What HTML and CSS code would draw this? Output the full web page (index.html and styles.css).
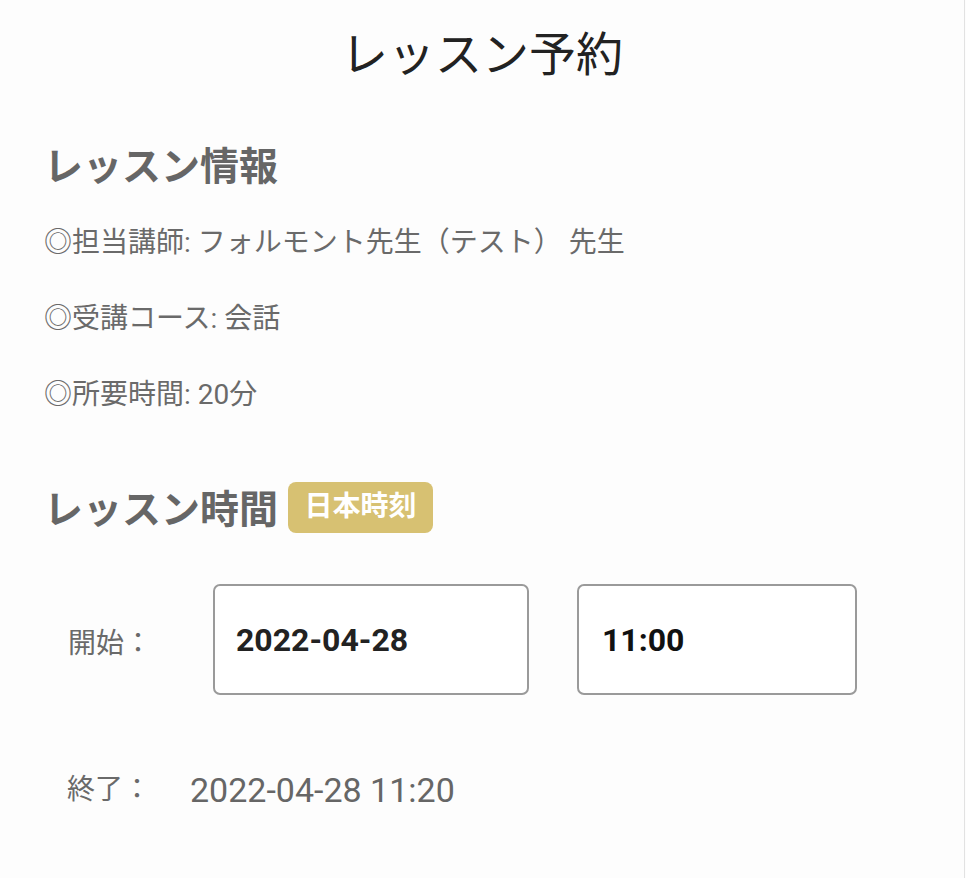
FILE: index.html
```html
<!DOCTYPE html>
<html lang="ja">
<head>
<meta charset="utf-8">
<title>レッスン予約</title>
<link rel="stylesheet" href="styles.css">
</head>
<body>
<div class="page">
  <h1 class="title">レッスン予約</h1>
  <section class="info">
    <h2 class="heading">レッスン情報</h2>
    <p class="line">◎担当講師: フォルモント先生（テスト） 先生</p>
    <p class="line">◎受講コース: 会話</p>
    <p class="line">◎所要時間: 20分</p>
  </section>
  <section class="time">
    <h2 class="heading heading-row">レッスン時間<span class="badge">日本時刻</span></h2>
    <div class="start-row">
      <span class="label">開始：</span>
      <div class="field field-date">2022-04-28</div>
      <div class="field field-time">11:00</div>
    </div>
    <div class="end-row">
      <span class="label label-end">終了：</span>
      <span class="end-value">2022-04-28 11:20</span>
    </div>
  </section>
</div>
</body>
</html>
```
FILE: styles.css
```css
html, body {
  margin: 0;
  padding: 0;
  background: #fdfdfd;
}
body {
  font-family: Roboto, "Noto Sans CJK JP", sans-serif;
  color: #666;
}
.page {
  width: 965px;
  height: 878px;
  box-sizing: border-box;
  border-right: 1px solid #e2e2e2;
  overflow: hidden;
}
.title {
  margin: 0;
  padding-top: 23px;
  font-size: 47px;
  line-height: 64px;
  font-weight: 400;
  color: #222;
  text-align: center;
}
.info {
  padding-left: 44px;
}
.heading {
  margin: 0;
  font-size: 39px;
  line-height: 54px;
  font-weight: 700;
  color: #666;
}
.info .heading {
  margin-top: 53px;
  margin-bottom: 29px;
}
.line {
  margin: 0 0 36px;
  font-size: 28px;
  line-height: 40px;
  color: #6a6a6a;
}
.time {
  padding-left: 44px;
}
.heading-row {
  display: flex;
  align-items: center;
  margin-top: 68px;
}
.badge {
  display: inline-flex;
  align-items: center;
  justify-content: center;
  margin-left: 10px;
  width: 145px;
  height: 51px;
  border-radius: 8px;
  background: #d7c172;
  color: #fff;
  font-size: 28px;
  font-weight: 700;
  margin-top: -6px;
}
.start-row {
  display: flex;
  align-items: center;
  margin-top: 47px;
  padding-left: 24px;
}
.label {
  width: 145px;
  font-size: 28px;
  line-height: 40px;
  color: #6a6a6a;
  padding-top: 8px;
}
.field {
  box-sizing: border-box;
  height: 111px;
  border: 2px solid #9a9a9a;
  border-radius: 7px;
  background: #fff;
  display: flex;
  align-items: center;
  font-size: 32px;
  font-weight: 700;
  color: #222;
}
.field-date {
  width: 316px;
  padding-left: 21px;
}
.field-time {
  width: 280px;
  margin-left: 48px;
  padding-left: 23px;
  color: #111;
}
.end-row {
  display: flex;
  align-items: center;
  margin-top: 73px;
  padding-left: 23px;
}
.label-end {
  width: 123px;
  padding-top: 0;
}
.end-value {
  font-size: 34px;
  line-height: 44px;
  color: #666;
}
```
